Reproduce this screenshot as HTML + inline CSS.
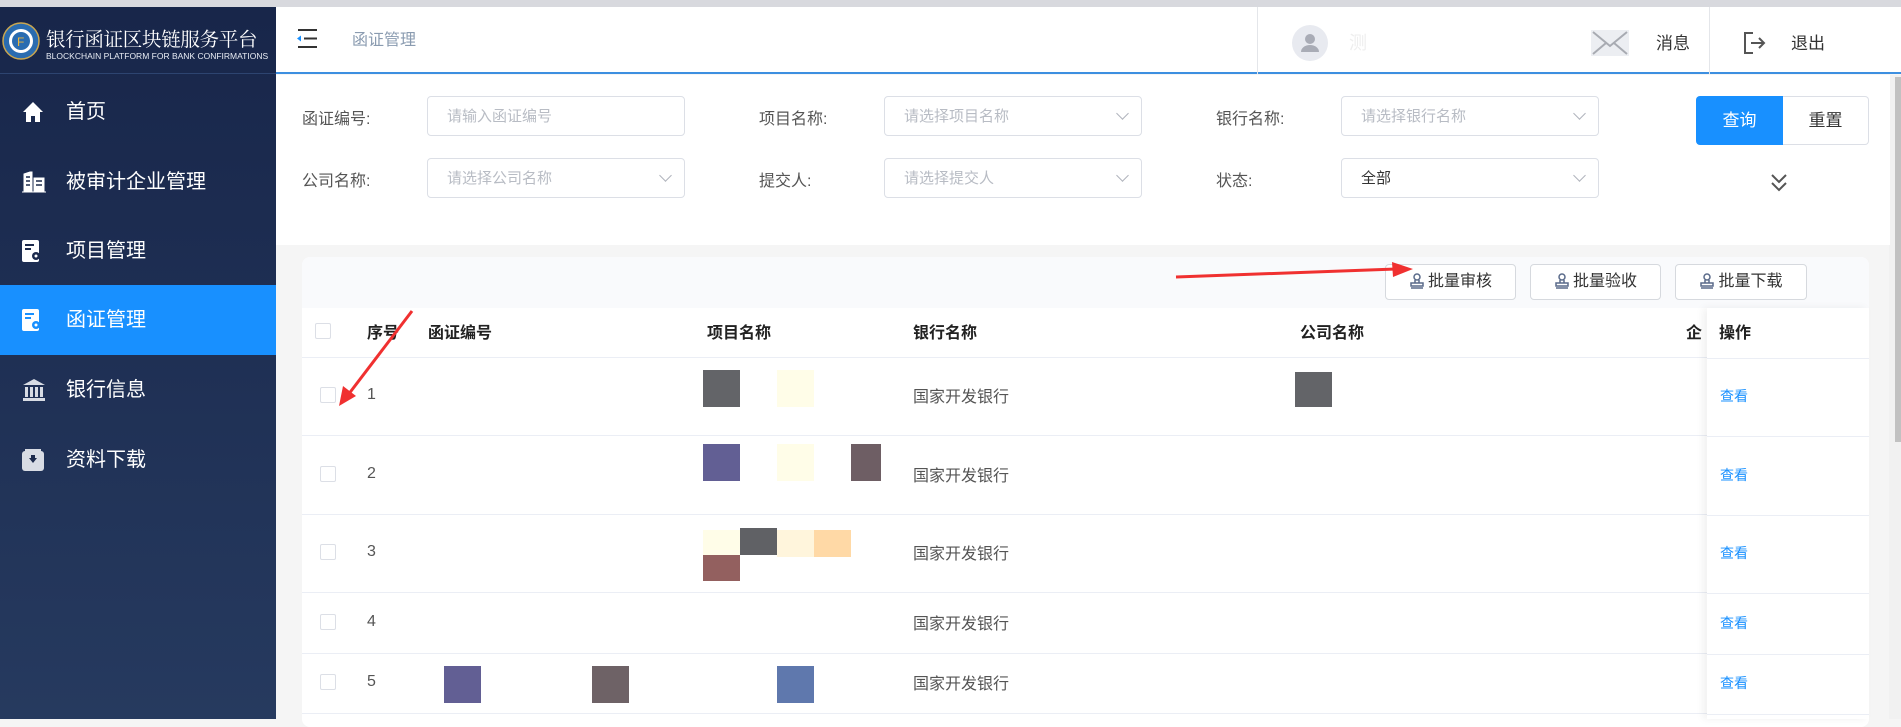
<!DOCTYPE html>
<html><head><meta charset="utf-8"><style>
*{margin:0;padding:0;box-sizing:border-box}
body{width:1901px;height:719px;overflow:hidden;background:#f5f5f5;font-family:"Liberation Sans","Noto Sans CJK SC",sans-serif;position:relative}
.a{position:absolute}
.topbar{left:0;top:0;width:1901px;height:7px;background:#d8d9de}
.side{left:0;top:7px;width:276px;height:712px;background:linear-gradient(#18264a,#263a5f)}
.logo{left:0;top:7px;width:276px;height:67px;border-bottom:1px solid #2d4470}
.mi{left:0;width:276px;height:70px;color:#fff;font-size:20px;line-height:70px;padding-left:66px}
.mi.act{background:#1890ff}
.ico{position:absolute;left:22px;top:24px}
.hdr{left:276px;top:7px;width:1625px;height:67px;background:#fff;border-bottom:2px solid #3d8fe0}
.filter{left:276px;top:75px;width:1614px;height:170px;background:#fff}
.lbl{font-size:16px;color:#555}
.inp{height:40px;border:1px solid #dcdfe6;border-radius:4px;background:#fff;font-size:15px;color:#b8bcc4;line-height:40px;padding-left:19px}
.chev{position:absolute;right:14px;top:12px;width:9px;height:9px;border-right:1px solid #b0b4bc;border-bottom:1px solid #b0b4bc;transform:rotate(45deg)}
.card{left:302px;top:257px;width:1567px;height:470px;background:#fff;border-radius:8px}
.tbar{left:302px;top:257px;width:1567px;height:51px;background:#f9fafc;border-radius:8px 8px 0 0}
.bb{height:36px;border:1px solid #d6d9de;border-radius:4px;background:#fff;font-size:16px;color:#333;line-height:34px;text-align:center}
.bb svg{vertical-align:-3px;margin-right:3px}
.th{font-size:16px;font-weight:bold;color:#222;top:319px}
.row{left:302px;width:1567px;border-bottom:1px solid #ebeef5}
.cb{width:16px;height:16px;border:1px solid #dcdfe6;border-radius:2px;background:#fff}
.td{font-size:16px;color:#555}
.tc{font-size:16px;color:#555;left:913px}
.lk{font-size:14px;color:#1890ff;left:1720px}
.blk{position:absolute}
</style></head><body>
<div class="a topbar"></div>
<div class="a side"></div>
<div class="a logo">
 <svg class="a" style="left:2px;top:15px" width="38" height="38" viewBox="0 0 38 38"><circle cx="19" cy="19" r="18" fill="#2a6cb0" stroke="#c9a650" stroke-width="1.5"/><circle cx="19" cy="19" r="12" fill="#fff"/><circle cx="19" cy="19" r="9" fill="#2a6cb0"/><text x="15" y="24" font-size="12" fill="#e8b640" font-family="Liberation Sans">F</text></svg>
 <div class="a" style="left:46px;top:17px;color:#fff;font-size:19.5px;font-family:'Liberation Serif','Noto Serif CJK SC',serif;white-space:nowrap;letter-spacing:-0.3px">银行函证区块链服务平台</div>
 <div class="a" style="left:46px;top:44px;color:#e8ecf4;font-size:8.5px;white-space:nowrap">BLOCKCHAIN PLATFORM FOR BANK CONFIRMATIONS</div>
</div>
<div class="a mi" style="top:77px"><svg class="ico" width="22" height="22" viewBox="0 0 22 22"><path d="M11 1L1 11h3v10h5v-6h4v6h5V11h3z" fill="#fff"/></svg>首页</div>
<div class="a mi" style="top:147px"><svg class="ico" width="24" height="22" viewBox="0 0 24 22"><path d="M2 20V3l6-2h2v19zM12 20V7h10v13zM0 21h24" fill="#fff" stroke="#fff"/><path d="M4 6h4M4 10h4M4 14h4M14 10h6M14 14h6" stroke="#1c2a4c" stroke-width="1.5"/></svg>被审计企业管理</div>
<div class="a mi" style="top:216px"><svg class="ico" width="22" height="23" viewBox="0 0 22 23"><rect x="0" y="0" width="17" height="22" rx="2" fill="#fff"/><path d="M3 5h9M3 9h6" stroke="#1c2a4c" stroke-width="2"/><circle cx="14" cy="16" r="4" fill="#1c2a4c"/><circle cx="14" cy="16" r="1.5" fill="#fff"/></svg>项目管理</div>
<div class="a mi act" style="top:285px"><svg class="ico" width="22" height="23" viewBox="0 0 22 23"><rect x="0" y="0" width="17" height="22" rx="2" fill="#fff"/><path d="M3 5h9M3 9h6" stroke="#1890ff" stroke-width="2"/><circle cx="14" cy="16" r="4" fill="#1890ff"/><circle cx="14" cy="16" r="1.5" fill="#fff"/></svg>函证管理</div>
<div class="a mi" style="top:355px"><svg class="ico" width="24" height="22" viewBox="0 0 24 22"><path d="M12 0L1 6h22z" fill="#d8dce4"/><path d="M3 8h3v10H3zM8 8h3v10H8zM13 8h3v10h-3zM18 8h3v10h-3zM1 19h22v3H1z" fill="#d8dce4"/></svg>银行信息</div>
<div class="a mi" style="top:425px"><svg class="ico" width="22" height="22" viewBox="0 0 22 22"><rect x="0" y="2" width="22" height="20" rx="3" fill="#d8dce4"/><path d="M3 0h16v3H3z" fill="#d8dce4"/><path d="M7 9h8l-4 5z M9 6h4v4H9z" fill="#1c2a4c"/></svg>资料下载</div>

<div class="a hdr">
 <svg class="a" style="left:20px;top:22px" width="22" height="20" viewBox="0 0 22 20"><path d="M2 1h19M8 9.5h13M2 18h19" stroke="#333" stroke-width="2"/><path d="M1 9.5l4-3v6z" fill="#1890ff"/></svg>
 <div class="a" style="left:76px;top:19px;font-size:16px;color:#8a9bb0">函证管理</div>
 <div class="a" style="left:981px;top:0;width:1px;height:67px;background:#e4e6ea"></div>
 <div class="a" style="left:1016px;top:18px;width:36px;height:36px;border-radius:50%;background:#e8eaf0"><svg width="36" height="36" viewBox="0 0 36 36"><circle cx="18" cy="14" r="5" fill="#a9acb6"/><path d="M9 27a9 7 0 0 1 18 0z" fill="#a9acb6"/></svg></div>
 <div class="a" style="left:1073px;top:22px;font-size:18px;color:#eee">测</div>
 <svg class="a" style="left:1315px;top:23px" width="38" height="26" viewBox="0 0 38 26"><rect width="38" height="26" fill="#eceef2"/><path d="M2 2l17 14L36 2M2 24l13-11M36 24L23 13" stroke="#a8abb2" stroke-width="2" fill="none"/></svg>
 <div class="a" style="left:1380px;top:22px;font-size:17px;color:#333">消息</div>
 <div class="a" style="left:1433px;top:0;width:1px;height:67px;background:#e4e6ea"></div>
 <svg class="a" style="left:1467px;top:24px" width="24" height="24" viewBox="0 0 24 24"><path d="M10 2H2v20h8" stroke="#555" stroke-width="2" fill="none"/><path d="M8 12h13M16 7l5 5-5 5" stroke="#555" stroke-width="2" fill="none"/></svg>
 <div class="a" style="left:1515px;top:22px;font-size:17px;color:#333">退出</div>
</div>
<div class="a" style="left:1889px;top:75px;width:12px;height:644px;background:#f1f1f1"></div>
<div class="a" style="left:1895px;top:77px;width:6px;height:365px;background:#c1c1c1"></div>

<div class="a filter"></div>
<div class="a lbl" style="left:302px;top:105px">函证编号:</div>
<div class="a lbl" style="left:759px;top:105px">项目名称:</div>
<div class="a lbl" style="left:1216px;top:105px">银行名称:</div>
<div class="a lbl" style="left:302px;top:167px">公司名称:</div>
<div class="a lbl" style="left:759px;top:167px">提交人:</div>
<div class="a lbl" style="left:1216px;top:167px">状态:</div>
<div class="a inp" style="left:427px;top:96px;width:258px">请输入函证编号</div>
<div class="a inp" style="left:884px;top:96px;width:258px">请选择项目名称<span class="chev"></span></div>
<div class="a inp" style="left:1341px;top:96px;width:258px">请选择银行名称<span class="chev"></span></div>
<div class="a inp" style="left:427px;top:158px;width:258px">请选择公司名称<span class="chev"></span></div>
<div class="a inp" style="left:884px;top:158px;width:258px">请选择提交人<span class="chev"></span></div>
<div class="a inp" style="left:1341px;top:158px;width:258px;color:#333">全部<span class="chev"></span></div>
<div class="a" style="left:1696px;top:96px;width:87px;height:49px;background:#1890ff;border-radius:4px 0 0 4px;color:#fff;font-size:17px;line-height:49px;text-align:center">查询</div>
<div class="a" style="left:1783px;top:96px;width:86px;height:49px;border:1px solid #dcdfe6;border-left:none;border-radius:0 4px 4px 0;background:#fff;color:#333;font-size:17px;line-height:47px;text-align:center">重置</div>
<svg class="a" style="left:1769px;top:173px" width="20" height="20" viewBox="0 0 20 20"><path d="M3 2l7 7 7-7M3 10l7 7 7-7" stroke="#555" stroke-width="2" fill="none"/></svg>

<div class="a card"></div>
<div class="a tbar"></div>
<div class="a bb" style="left:1385px;top:264px;width:131px"><svg width="16" height="16" viewBox="0 0 16 16"><circle cx="8" cy="4" r="3" fill="none" stroke="#5a6a8a" stroke-width="1.5"/><path d="M6 7v3M10 7v3M2 10h12v3H2zM2 15h12" stroke="#5a6a8a" stroke-width="1.5" fill="none"/></svg>批量审核</div>
<div class="a bb" style="left:1530px;top:264px;width:131px"><svg width="16" height="16" viewBox="0 0 16 16"><circle cx="8" cy="4" r="3" fill="none" stroke="#5a6a8a" stroke-width="1.5"/><path d="M6 7v3M10 7v3M2 10h12v3H2zM2 15h12" stroke="#5a6a8a" stroke-width="1.5" fill="none"/></svg>批量验收</div>
<div class="a bb" style="left:1675px;top:264px;width:132px"><svg width="16" height="16" viewBox="0 0 16 16"><circle cx="8" cy="4" r="3" fill="none" stroke="#5a6a8a" stroke-width="1.5"/><path d="M6 7v3M10 7v3M2 10h12v3H2zM2 15h12" stroke="#5a6a8a" stroke-width="1.5" fill="none"/></svg>批量下载</div>

<div class="a row" style="top:308px;height:50px"></div>
<div class="a cb" style="left:315px;top:323px"></div>
<div class="a th" style="left:367px">序号</div>
<div class="a th" style="left:428px">函证编号</div>
<div class="a th" style="left:707px">项目名称</div>
<div class="a th" style="left:913px">银行名称</div>
<div class="a th" style="left:1300px">公司名称</div>
<div class="a th" style="left:1686px">企</div>

<div class="a row" style="top:358px;height:78px"></div>
<div class="a row" style="top:436px;height:79px"></div>
<div class="a row" style="top:515px;height:78px"></div>
<div class="a row" style="top:593px;height:61px"></div>
<div class="a row" style="top:654px;height:60px"></div>

<div class="a" style="left:1707px;top:308px;width:162px;height:411px;background:#fff;box-shadow:-4px 0 8px rgba(0,0,0,.06)"></div>
<div class="a th" style="left:1719px">操作</div>
<div class="a" style="left:1707px;top:358px;width:162px;height:1px;background:#ebeef5"></div>
<div class="a" style="left:1707px;top:436px;width:162px;height:1px;background:#ebeef5"></div>
<div class="a" style="left:1707px;top:515px;width:162px;height:1px;background:#ebeef5"></div>
<div class="a" style="left:1707px;top:593px;width:162px;height:1px;background:#ebeef5"></div>
<div class="a" style="left:1707px;top:654px;width:162px;height:1px;background:#ebeef5"></div>
<div class="a" style="left:1707px;top:714px;width:162px;height:1px;background:#ebeef5"></div>

<div class="a cb" style="left:320px;top:387px"></div><div class="a td" style="left:367px;top:386px">1</div>
<div class="a cb" style="left:320px;top:466px"></div><div class="a td" style="left:367px;top:465px">2</div>
<div class="a cb" style="left:320px;top:544px"></div><div class="a td" style="left:367px;top:543px">3</div>
<div class="a cb" style="left:320px;top:614px"></div><div class="a td" style="left:367px;top:613px">4</div>
<div class="a cb" style="left:320px;top:674px"></div><div class="a td" style="left:367px;top:673px">5</div>
<div class="a tc" style="top:383px">国家开发银行</div>
<div class="a tc" style="top:462px">国家开发银行</div>
<div class="a tc" style="top:540px">国家开发银行</div>
<div class="a tc" style="top:610px">国家开发银行</div>
<div class="a tc" style="top:670px">国家开发银行</div>
<div class="a lk" style="top:386px">查看</div>
<div class="a lk" style="top:465px">查看</div>
<div class="a lk" style="top:543px">查看</div>
<div class="a lk" style="top:613px">查看</div>
<div class="a lk" style="top:673px">查看</div>

<div class="blk" style="left:703px;top:370px;width:37px;height:37px;background:#636468"></div>
<div class="blk" style="left:777px;top:370px;width:37px;height:37px;background:#fffde8"></div>
<div class="blk" style="left:703px;top:444px;width:37px;height:37px;background:#625f94"></div>
<div class="blk" style="left:777px;top:444px;width:37px;height:37px;background:#fffde8"></div>
<div class="blk" style="left:851px;top:444px;width:30px;height:37px;background:#6e5e64"></div>
<div class="blk" style="left:703px;top:530px;width:37px;height:27px;background:#fffde8"></div>
<div class="blk" style="left:740px;top:528px;width:37px;height:27px;background:#606165"></div>
<div class="blk" style="left:777px;top:530px;width:37px;height:27px;background:#fff5dc"></div>
<div class="blk" style="left:814px;top:530px;width:37px;height:27px;background:#ffd9a6"></div>
<div class="blk" style="left:703px;top:555px;width:37px;height:26px;background:#93605f"></div>
<div class="blk" style="left:1295px;top:372px;width:37px;height:35px;background:#636468"></div>
<div class="blk" style="left:444px;top:666px;width:37px;height:37px;background:#625f94"></div>
<div class="blk" style="left:592px;top:666px;width:37px;height:37px;background:#6e6266"></div>
<div class="blk" style="left:777px;top:666px;width:37px;height:37px;background:#5f78ad"></div>

<svg class="a" style="left:0;top:0" width="1901" height="719">
 <path d="M1176 277L1396 269" stroke="#f03030" stroke-width="3"/>
 <path d="M1413 269L1392 262L1393 277z" fill="#f03030"/>
 <path d="M412 311L348 395" stroke="#f03030" stroke-width="3"/>
 <path d="M339 406L343 386L356 396z" fill="#f03030"/>
</svg>
</body></html>
